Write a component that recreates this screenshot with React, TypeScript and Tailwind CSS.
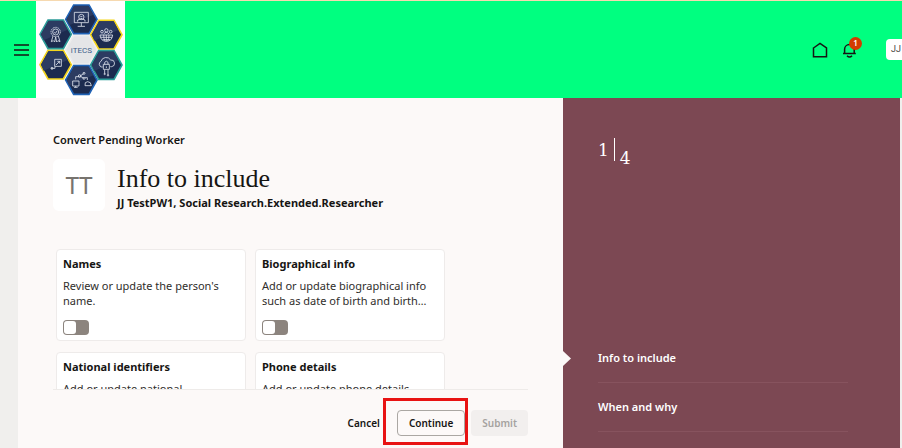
import { useState } from 'react'
import type { ReactNode } from 'react'

interface Section {
  id: string
  title: string
  text: string
}

const SECTIONS: Section[] = [
  { id: 'names', title: 'Names', text: "Review or update the person's name." },
  { id: 'bio', title: 'Biographical info', text: 'Add or update biographical info such as date of birth and birth…' },
  { id: 'national', title: 'National identifiers', text: 'Add or update national' },
  { id: 'phone', title: 'Phone details', text: 'Add or update phone details' },
]

const STEPS = ['Info to include', 'When and why']

export default function App() {
  const [included, setIncluded] = useState<string[]>([])

  function toggle(id: string) {
    setIncluded(included.includes(id) ? included.filter(i => i !== id) : [...included, id])
  }

  return (
    <div className="flex h-screen flex-col overflow-hidden bg-[#f0efed] font-['Noto_Sans',sans-serif] text-[#161513]">
      <Header />
      <div className="grid min-h-0 flex-1 grid-cols-[545fr_337fr] grid-rows-1 pr-0.5 pl-[18px]">
        <main className="flex min-h-0 min-w-0 flex-col bg-[#fcf9f8] px-[35px]">
          <p className="pt-8 text-[11px] leading-5 font-semibold">Convert Pending Worker</p>
          <div className="mt-[9px] flex items-center gap-3">
            <div className="flex size-[52px] shrink-0 items-center justify-center rounded-md bg-white font-['Lato',sans-serif] text-[23px] text-[#77736e]">
              TT
            </div>
            <div className="min-w-0 pt-1">
              <h1 className="font-['Liberation_Serif',serif] text-[26px] leading-8">Info to include</h1>
              <p className="text-[11px] leading-4 font-bold">JJ TestPW1, Social Research.Extended.Researcher</p>
            </div>
          </div>

          <div className="mt-[38px] min-h-0 flex-1 overflow-hidden pr-[83px] pl-[3px]">
            <div className="grid grid-cols-2 gap-x-[9px] gap-y-[11px]">
              {SECTIONS.map(section => (
                <SectionCard
                  key={section.id}
                  section={section}
                  checked={included.includes(section.id)}
                  onToggle={() => toggle(section.id)}
                />
              ))}
            </div>
          </div>

          <footer className="flex items-center justify-end border-t border-[#eeebe9] pt-5 pb-3 text-[10px] font-semibold">
            <button className="mr-[17px] h-[26px]">Cancel</button>
            <div className="relative mr-1.5">
              <button className="h-[26px] rounded border border-[#aaa7a3] px-[11px]">Continue</button>
              {/* Highlight around the next action */}
              <div className="pointer-events-none absolute -top-3 -right-[3px] -bottom-[9px] -left-3.5 border-[3px] border-[#e81313]" />
            </div>
            <button disabled className="h-[26px] rounded bg-[#f2efee] px-[11px] text-[#a5a29f]">Submit</button>
          </footer>
        </main>

        <aside className="flex min-w-0 flex-col bg-[#7c4853] pr-[52px] pl-[35px] text-white">
          <div className="flex pt-10 font-['DejaVu_Serif',serif] text-[17px] leading-6">
            <span>1</span>
            <span className="mx-[5px] h-[23px] w-px bg-white" />
            <span className="pt-2">4</span>
          </div>
          <nav className="relative mt-auto text-[11px] font-semibold">
            <svg className="absolute top-[17px] -left-[35px] h-[15px] w-2" viewBox="0 0 8 15">
              <path d="M0 0 8 7.500 0 15Z" fill="#fcf9f8" />
            </svg>
            {STEPS.map(step => (
              <a key={step} href="#" className="flex h-[49px] items-center border-b border-[#87535e]">{step}</a>
            ))}
            <div className="h-4" />
          </nav>
        </aside>
      </div>
    </div>
  )
}

function Header() {
  return (
    <header className="flex h-[98px] shrink-0 items-center border-t border-[#f6d9b0] bg-[#00ff80]">
      <button aria-label="Navigator" className="ml-3.5 shrink-0">
        <svg className="h-3 w-[15px]" viewBox="0 0 15 12" stroke="#161513" strokeWidth="1.500">
          <path d="M0 1h15M0 6h15M0 11h15" />
        </svg>
      </button>
      <a href="#" aria-label="Home page" className="ml-[7px] shrink-0">
        <Logo />
      </a>
      <div className="ml-auto flex items-center">
        <button aria-label="Home" className="mr-3.5">
          <svg className="size-4" viewBox="0 0 16 16" fill="none" stroke="#161513" strokeWidth="1.500">
            <path d="M1.500 6 8 1.500 14.500 6v8.700h-13Z" />
          </svg>
        </button>
        <button aria-label="Notifications" className="relative mr-7">
          <svg className="size-4" viewBox="0 0 16 16" fill="none" stroke="#161513" strokeWidth="1.500">
            <path d="M1 11.500h12.800M2.600 11.500V7.300a4.800 4.800 0 0 1 9.600 0v4.200M5 13.800q2.500 2.500 5 0" />
          </svg>
          <span className="absolute -top-[5px] left-[7px] flex size-[13px] items-center justify-center rounded-full bg-[#d33b00] text-[8px] font-semibold text-white">
            1
          </span>
        </button>
        <button className="h-[21px] rounded-l bg-white pr-px pl-[5px] font-['Roboto',sans-serif] text-[9px] text-[#4b4845]">JJ</button>
      </div>
    </header>
  )
}

function SectionCard({ section, checked, onToggle }: { section: Section; checked: boolean; onToggle: () => void }) {
  return (
    <div className="flex h-[92px] flex-col items-start rounded border border-[#eeebea] bg-white px-1.5">
      <label htmlFor={section.id} className="pt-1.5 text-[11px] leading-4 font-bold">{section.title}</label>
      <p className="mt-1.5 text-[11px] leading-[15px] text-[#302e2b]">{section.text}</p>
      <input
        id={section.id}
        type="checkbox"
        role="switch"
        checked={checked}
        onChange={onToggle}
        className="mt-auto mb-[5px] h-[15px] w-[26px] shrink-0 appearance-none rounded bg-[#8c847e] before:m-px before:block before:h-[13px] before:w-3 before:rounded-[3px] before:bg-white checked:bg-[#4d7a3a] checked:before:ml-[13px]"
      />
    </div>
  )
}

function Hex({ x, y, stroke, fill = '#1c2b4f', children }: { x: number; y: number; stroke: string; fill?: string; children?: ReactNode }) {
  return (
    <g transform={`translate(${x} ${y})`}>
      <path d="M-47 0-23-43H23L47 0 23 43H-23Z" fill={fill} stroke={stroke} strokeWidth="5" />
      {children && <path d="M-44 0-22-40H22L36-14-36 18Z" fill="#2c3b61" />}
      <g fill="none" stroke="#dde2ec" strokeWidth="2.500">{children}</g>
    </g>
  )
}

function Logo() {
  return (
    <svg className="h-[97px] w-[89px] bg-white" viewBox="0 0 267 291">
      <Hex x={136} y={146} stroke="#ededed" fill="#e4e5e7" />
      <Hex x={136} y={55} stroke="#1f62b5">
        <path d="M-21-21H21V10H-21ZM0 10v10M-11 21H11M-11 7v-5q11-8 22 0v5" />
        <circle cy="-7" r="8" />
        <path d="M-3-8h6M0-4v4" />
      </Hex>
      <Hex x={211} y={101} stroke="#f4d51d">
        <path d="M-19 1H19Q17 20 0 20T-19 1ZM-17 8h34M-11 15h22M0 1v19M-8 1q0 12 4 18M8 1q0 12-4 18" />
        <circle cy="-13" r="5" />
        <circle cx="-13" cy="-9" r="4" />
        <circle cx="13" cy="-9" r="4" />
        <path d="M-8-2q8-10 16 0" />
      </Hex>
      <Hex x={211} y={192} stroke="#2b9b98">
        <path d="M-11 6h-3a9 9 0 0 1-2-17 16 16 0 0 1 29-4 10 10 0 0 1 3 20h-4M-5 14v12M5 14v16" />
        <path d="M-9-2H9v15H-9ZM-5-2v-6q5-7 10 0v6M0 4v5" />
        <circle cx="-5" cy="27" r="2" />
        <circle cx="5" cy="31" r="2" />
      </Hex>
      <Hex x={136} y={237} stroke="#1f62b5">
        <path d="M-26 3H-7V18H-26ZM-17 18v4M-22 22h11M11 17q-2-12 8-12 10 0 11 12ZM-17-2v-8h12M18 0v-7h-7M-4-12 7-19M-4-12 7-5" />
        <circle cx="-5" cy="-12" r="4" />
        <circle cx="8" cy="-20" r="3" />
        <circle cx="8" cy="-5" r="3" />
      </Hex>
      <Hex x={59} y={191} stroke="#f4d51d">
        <path d="M-3-16H17V5H-3ZM1 1 12-10M5-10h7v7M-14 11h12V5" />
        <circle cx="-11" cy="11" r="3" />
      </Hex>
      <Hex x={59} y={100} stroke="#2b9b98">
        <circle cy="-7" r="14" strokeDasharray="5 2" />
        <circle cy="-7" r="9" />
        <path d="m-4-6 3 3 5-7M-8 5l-5 17 6-3 4 4 3-15M8 5l5 17-6-3-4 4-3-15" />
      </Hex>
      <text x="136" y="155" textAnchor="middle" className="font-['Roboto',sans-serif] text-[24px]" fill="#40608a">iTECS</text>
    </svg>
  )
}
